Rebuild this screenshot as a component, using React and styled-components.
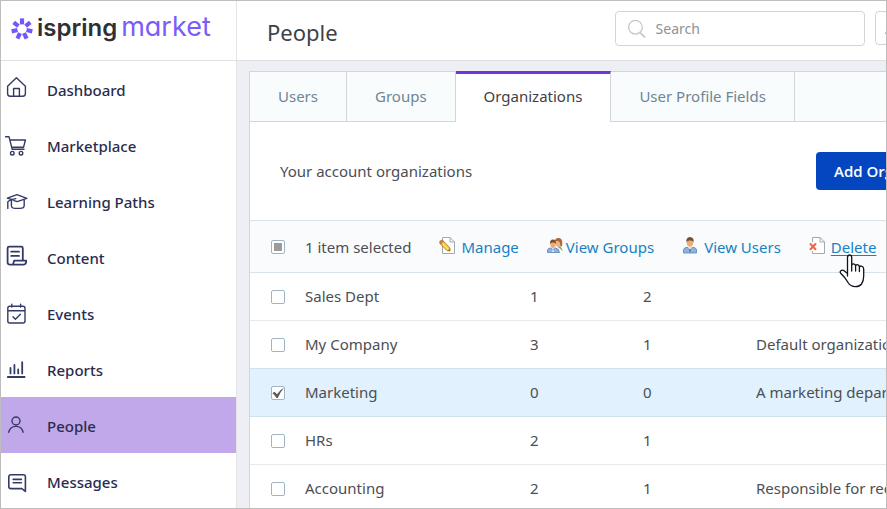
import React, { useEffect, useRef, useState } from "react";
import styled, { createGlobalStyle, css } from "styled-components";

const GlobalStyle = createGlobalStyle`
  *, *::before, *::after { box-sizing: border-box; }
  body { margin: 0; font-family: "Noto Sans", sans-serif; font-size: 15px; color: #4b4f54; background: #fff; }
`;

const Shell = styled.div`
  display: grid;
  grid-template-columns: 236px minmax(0, 1fr);
  height: 100vh;
  overflow: hidden;
  border: 1px solid #bdbdbd;
  background: #eeeff4;
`;

const Sidebar = styled.aside`
  min-height: 0;
  overflow: hidden;
  background: #fff;
  border-right: 1px solid #e3e3e5;
`;

const Brand = styled.a`
  display: flex;
  align-items: flex-start;
  gap: 3px;
  height: 60px;
  padding: 12px 9px;
  border-bottom: 1px solid #e0e0e2;
  color: #2d3136;
  text-decoration: none;
  font-family: Inter, sans-serif;
  white-space: nowrap;
`;

const BrandMark = styled.svg`
  flex: none;
  width: 24px;
  height: 32px;
`;

const BrandText = styled.span`
  display: flex;
  align-items: baseline;
  gap: 4px;
  line-height: 28px;
`;

const BrandName = styled.span`
  font-size: 24px;
  font-weight: 600;
`;

const BrandProduct = styled.span`
  color: #7a5cfa;
  font-size: 27px;
  font-weight: 400;
  font-feature-settings: "cv11";
`;

const NavLink = styled.a`
  display: flex;
  align-items: flex-start;
  gap: 20px;
  height: 56px;
  padding: 15px 4px;
  color: #2a2c4f;
  background: ${(p) => (p.$active ? "#c1a8ea" : "transparent")};
  font-weight: 500;
  line-height: 28px;
  text-decoration: none;
`;

const NavIcon = styled.svg`
  flex: none;
  width: 22px;
  height: 22px;
  overflow: visible;
  fill: none;
  stroke: #343a66;
  stroke-width: 1.4;
  stroke-linecap: round;
  stroke-linejoin: round;
`;

const Main = styled.main`
  display: flex;
  flex-direction: column;
  min-width: 0;
  overflow: hidden;
`;

const Header = styled.header`
  display: grid;
  flex: none;
  grid-template-columns: minmax(338px, 1fr) 250px auto;
  column-gap: 10px;
  height: 60px;
  padding: 10px 0 0 30px;
  background: #fff;
  border-bottom: 1px solid #e0e0e2;
`;

const PageTitle = styled.h1`
  margin: 0;
  color: #3e4247;
  font-size: 22px;
  font-weight: 400;
  line-height: 42px;
`;

const SearchBox = styled.label`
  display: flex;
  align-items: center;
  gap: 10px;
  height: 35px;
  padding: 0 12px;
  border: 1px solid #d3d4d8;
  border-radius: 4px;
`;

const SearchInput = styled.input`
  width: 100%;
  min-width: 0;
  padding: 0;
  border: 0;
  outline: 0;
  color: #4b4f54;
  font: inherit;
  font-size: 14px;
  &::placeholder { color: #8c939b; opacity: 1; }
`;

const HeaderButton = styled.button`
  height: 34px;
  padding: 0 9px;
  border: 1px solid #d3d4d8;
  border-radius: 4px;
  background: #fff;
  color: #8c939b;
  font: inherit;
  font-size: 14px;
`;

const Panel = styled.section`
  display: flex;
  flex: 1;
  flex-direction: column;
  margin: 10px 0 0 12px;
  background: #fff;
  border-top: 1px solid #d3d5d8;
  border-left: 1px solid #d3d5d8;
`;

const Tabs = styled.nav`
  display: flex;
  flex: none;
  height: 50px;
  background: #f8fcfd;
  box-shadow: inset 0 -1px #d3d5d8;
`;

const Tab = styled.a`
  padding: 0 28px;
  border-right: 1px solid #d3d5d8;
  color: #6f8596;
  line-height: 49px;
  text-decoration: none;
  white-space: nowrap;
  ${(p) =>
    p.$active &&
    css`
      margin-top: -1px;
      border-top: 3px solid #6f38d6;
      background: #fff;
      color: #3e4247;
      line-height: 45px;
    `}
`;

const Intro = styled.div`
  display: grid;
  flex: none;
  grid-template-columns: minmax(536px, 1fr) auto;
  align-items: center;
  height: 98px;
  padding: 0 30px;
`;

const IntroText = styled.p`
  margin: 0;
`;

const PrimaryButton = styled.button`
  height: 38px;
  padding: 0 18px;
  border: 0;
  border-radius: 4px;
  background: #0446c0;
  color: #fff;
  font: 600 15px "Open Sans", sans-serif;
  white-space: nowrap;
`;

const Toolbar = styled.div`
  display: grid;
  flex: none;
  grid-template-columns: 55px auto;
  justify-content: start;
  align-items: center;
  height: 53px;
  border-top: 1px solid #d8e3ec;
  border-bottom: 1px solid #d8e3ec;
  background: #f9fbfd;
  white-space: nowrap;
`;

const Actions = styled.div`
  display: flex;
  align-items: center;
  gap: 28px;
`;

const Action = styled.a`
  position: relative;
  display: flex;
  align-items: center;
  gap: ${(p) => p.$gap || 6}px;
  color: #1681c4;
  text-decoration: ${(p) => (p.$hovered ? "underline" : "none")};
  text-underline-offset: 2px;
`;

const ActionIcon = styled.svg`
  flex: none;
  width: 16px;
  height: 18px;
  margin-bottom: 4px;
`;

const Pointer = styled.svg`
  position: absolute;
  top: 18px;
  left: 30px;
  width: 26px;
  height: 34px;
`;

const Checkbox = styled.input`
  appearance: none;
  display: block;
  width: 14px;
  height: 14px;
  margin: 0 0 0 21px;
  border: 1px solid #a3b3c0;
  border-radius: 2px;
  background: #fff center / 12px 12px no-repeat;
  &:indeterminate { background: #9b9b9b; background-clip: content-box; padding: 2px; box-shadow: inset 0 0 0 2px #fff; }
  &:checked {
    background-image: url("data:image/svg+xml,%3Csvg xmlns='http://www.w3.org/2000/svg' viewBox='0 0 12 12'%3E%3Cpath d='M0.4 6.2L2.6 4.8L5 7.2Q7.5 3 12 0.8Q8.2 5 5.8 11H4.4Q3 8 .4 6.2Z' fill='%23595b5e'/%3E%3C/svg%3E");
  }
`;

const Table = styled.table`
  flex: none;
  width: 100%;
  border-collapse: separate;
  border-spacing: 0;
  table-layout: fixed;
`;

const Row = styled.tr`
  height: 48px;
  background: ${(p) => (p.$selected ? "#e1f1fe" : "#fff")};
`;

const Cell = styled.td`
  padding: 0 0 2px;
  overflow: hidden;
  border-bottom: 1px solid ${(p) => (p.$blue ? "#cfe2ef" : "#e7eaec")};
  white-space: nowrap;
`;

const CheckCell = styled(Cell)`
  padding: 0;
`;

const CheckColumn = styled.col`width: 55px;`;
const NameColumn = styled.col`width: 225px;`;
const CountColumn = styled.col`width: 113px;`;

const navItems = [
  ["Dashboard", <path d="M2.6 10.2 11.4 1.8 20.4 10.2V17.5Q20.4 20.2 17.8 20.2H5.2Q2.6 20.2 2.6 17.5ZM8.6 20V12.5H14.4V20" />],
  ["Marketplace", <><path d="M.6 4.7H4L7.2 17.3H19M4.8 8H20.4L18.6 15.2H6.8" /><circle cx="7.3" cy="21.2" r="1.8" /><circle cx="16" cy="21.2" r="1.8" /></>],
  ["Learning Paths", <path d="M2.4 10.2 12 6.6 21.8 10.4 12.2 13.6 9 12.6M2.4 10.2 8 11.8M6.4 12V18Q6.6 20.4 10.5 20.4H15Q19.2 20.4 19.2 17.5V12M2.8 20.4V14Q3.4 12 10.8 10.6" />],
  ["Content", <path strokeWidth="1.8" d="M8 20.6H5Q2.6 20.6 2.6 18.4V4.2Q2.6 2.7 4.2 2.7H16.2Q17.8 2.7 17.8 4.2V16.2M6.2 7.7H14M6.2 11.9H14M8 20.6 9.2 16.6H21.2Q21.2 20.6 18.8 20.6H5" />],
  ["Events", <path d="M4.6 6.2H18Q20 6.2 20 8.2V21Q20 23 18 23H4.8Q2.8 23 2.8 21V8.2Q2.8 6.2 4.8 6.2M3 10.8H20M6.8 4.2V7M15.6 4.2V7M8 16.8 10.4 19.2 15.4 14.2" />],
  ["Reports", <path strokeWidth="1.8" d="M2.8 21H19.6M5.5 12V17.4M9.4 9V17.4M13.2 13.5V17.4M17.2 6.2V17.4" />],
  ["People", <><circle cx="11" cy="9" r="4" /><path d="M3.6 20.2Q5.4 14.4 11 14.4Q16.6 14.4 18.2 20.2" /></>],
  ["Messages", <path strokeWidth="1.6" d="M20.4 8.2V23.4L16.8 20.6H6Q3.8 20.6 3.8 18.5V8.8Q3.8 6.7 6 6.7H18.5Q20.4 6.7 20.4 8.8M8.2 11.4H16.4M8.2 14.8H16.4" />],
];

const rows = [
  ["Sales Dept", 1, 2, ""],
  ["My Company", 3, 1, "Default organization"],
  ["Marketing", 0, 0, "A marketing department"],
  ["HRs", 2, 1, ""],
  ["Accounting", 2, 1, "Responsible for records"],
];

const Sheet = () => (
  <path d="M3.5 1.5H11L15.5 6V17.5H3.5ZM11 1.5V6H15.5" fill="#fff" stroke="#a5a9ad" />
);

const UserFigure = () => (
  <>
    <path d="M1.5 17V14Q1.5 11.8 5 11.2L8 13 11 11.2Q14.5 11.8 14.5 14V17Z" fill="#8eb3df" stroke="#5c82b4" strokeWidth=".8" />
    <path d="M6.4 9H9.6V12L8 14 6.4 12Z" fill="#f3dcc6" />
    <path d="M8 12.5 8.8 14 8 16.8 7.2 14Z" fill="#3f5c84" />
    <ellipse cx="8" cy="6.3" rx="3.3" ry="4.3" fill="#e9ad78" />
    <path d="M4.4 6.2Q3.8 1.2 8 1Q12.2 1.2 11.6 6.2Q11 4.2 8 4.4Q5 4.2 4.4 6.2Z" fill="#76502f" />
  </>
);

const ManageIcon = () => (
  <ActionIcon viewBox="0 0 16 18" aria-hidden="true">
    <Sheet />
    <path d="M.8 5.2 3.5 4 11 12.2 11 15 8 14.6 1 7.6Z" fill="#f5cf37" stroke="#967326" strokeWidth=".8" />
    <path d="M.8 5.2 3.4 4 4.6 5.3 2.2 8.7 1 7.6Z" fill="#ce7467" />
    <path d="M9 14.6 11 15V12.6Z" fill="#bd3f24" />
    <path d="M3.8 8 9 13.2" stroke="#fff19c" />
  </ActionIcon>
);

const GroupsIcon = () => (
  <ActionIcon viewBox="0 0 16 18" aria-hidden="true">
    <path d="M10 10.5 13 10Q15.5 12 15.8 15.5L13.5 13Z" fill="#7bb94d" />
    <ellipse cx="11.5" cy="6.6" rx="3" ry="4.3" fill="#edb388" />
    <path d="M7.8 5Q8.5 1.6 12 2Q16.2 2.5 15 10L13.2 10.5Q14 6 11 5Z" fill="#b8622f" />
    <path d="M.5 16.5V14Q.5 12.5 3.5 12L6 13.5 8.5 12Q12 12.3 12.5 16.5Z" fill="#8eb3df" stroke="#5c82b4" strokeWidth=".8" />
    <path d="M6 12.5 6.8 16H5.2Z" fill="#fff" />
    <ellipse cx="6" cy="8.3" rx="2.7" ry="3.7" fill="#e9ad78" />
    <path d="M3 8Q2.6 3.8 6 3.6Q9.4 3.8 9 8Q8.4 6.2 6 6.4Q3.6 6.2 3 8Z" fill="#76502f" />
  </ActionIcon>
);

const UsersIcon = () => (
  <ActionIcon viewBox="0 0 16 18" aria-hidden="true"><UserFigure /></ActionIcon>
);

const DeleteIcon = () => (
  <ActionIcon viewBox="0 0 16 18" aria-hidden="true">
    <Sheet />
    <path d="M0 6H8V15H0Z" fill="#f9fbfd" />
    <path d="M1 7.5 7 13.8M7 7.5 1 13.8" stroke="#ee6548" strokeWidth="2" />
  </ActionIcon>
);

const SelectAll = () => {
  const ref = useRef(null);
  useEffect(() => {
    ref.current.indeterminate = true;
  }, []);
  return <Checkbox type="checkbox" ref={ref} aria-label="Select all" />;
};

export default function App() {
  const [selected, setSelected] = useState({ Marketing: true });
  const toggle = (name) => setSelected((s) => ({ ...s, [name]: !s[name] }));

  return (
    <>
      <GlobalStyle />
      <Shell>
        <Sidebar>
          <Brand href="#home">
            <BrandMark viewBox="0 0 24 32" aria-hidden="true">
              {[0, 1, 2, 3, 4, 5, 6].map((i) => (
                <path
                  key={i}
                  d="M9.9 5.4H14.1V11.4H9.9Z"
                  fill="#7457fa"
                  transform={`rotate(${(i * 360) / 7} 12 16)`}
                />
              ))}
            </BrandMark>
            <BrandText>
              <BrandName>ispring</BrandName>
              <BrandProduct>market</BrandProduct>
            </BrandText>
          </Brand>
          <nav>
            {navItems.map(([label, drawing]) => (
              <NavLink key={label} href={`#${label}`} $active={label === "People"}>
                <NavIcon viewBox="0 0 22 22" aria-hidden="true">{drawing}</NavIcon>
                <span>{label}</span>
              </NavLink>
            ))}
          </nav>
        </Sidebar>
        <Main>
          <Header>
            <PageTitle>People</PageTitle>
            <SearchBox>
              <svg width="20" height="22" viewBox="0 0 20 22" fill="none" stroke="#c5c7cd" strokeWidth="1.5" aria-hidden="true">
                <circle cx="8.5" cy="9" r="7.8" />
                <path d="M13.8 15 19.4 20.6" strokeWidth="2" />
              </svg>
              <SearchInput type="search" placeholder="Search" aria-label="Search" />
            </SearchBox>
            <HeaderButton type="button">All</HeaderButton>
          </Header>
          <Panel>
            <Tabs>
              <Tab href="#users">Users</Tab>
              <Tab href="#groups">Groups</Tab>
              <Tab href="#organizations" $active>Organizations</Tab>
              <Tab href="#fields">User Profile Fields</Tab>
            </Tabs>
            <Intro>
              <IntroText>Your account organizations</IntroText>
              <PrimaryButton type="button">Add Organization</PrimaryButton>
            </Intro>
            <Toolbar>
              <SelectAll />
              <Actions>
                <span>1 item selected</span>
                <Action href="#manage"><ManageIcon />Manage</Action>
                <Action href="#view-groups" $gap={3}><GroupsIcon />View Groups</Action>
                <Action href="#view-users"><UsersIcon />View Users</Action>
                <Action href="#delete" $hovered>
                  <DeleteIcon />Delete
                  <Pointer viewBox="0 0 26 34" aria-hidden="true">
                    <path
                      d="M8.5 22V3.2Q8.7 1 10.6 1Q12.5 1 12.7 3.2V11.5Q12.9 9.7 14.5 9.8Q16.4 9.9 16.6 12Q17 10.3 18.5 10.6Q20.3 11 20.4 13.2Q21 11.6 22.6 12.1Q24.6 12.6 24.7 15V22Q24.7 27 22.5 30Q20.5 32.6 16.5 32.6Q11.5 32.6 9 28.5Q7.4 26 5.4 23.2L1.5 19Q.7 17.6 1.9 16.7Q3.2 15.7 4.8 16.6L8.5 19.5M12.7 11V17M16.6 11.5V17M20.4 13V17.5"
                      fill="#fff" stroke="#10131c" strokeWidth="1.3" strokeLinejoin="round" strokeLinecap="round"
                    />
                  </Pointer>
                </Action>
              </Actions>
            </Toolbar>
            <Table>
              <colgroup>
                <CheckColumn />
                <NameColumn />
                <CountColumn />
                <CountColumn />
                <col />
              </colgroup>
              <tbody>
                {rows.map(([name, groups, users, description], i) => {
                  const blue = selected[name] || (rows[i + 1] && selected[rows[i + 1][0]]);
                  const id = `row-${i}`;
                  return (
                    <Row key={name} $selected={selected[name]}>
                      <CheckCell $blue={blue}>
                        <Checkbox type="checkbox" id={id} checked={!!selected[name]} onChange={() => toggle(name)} />
                      </CheckCell>
                      <Cell $blue={blue}><label htmlFor={id}>{name}</label></Cell>
                      <Cell $blue={blue}>{groups}</Cell>
                      <Cell $blue={blue}>{users}</Cell>
                      <Cell $blue={blue}>{description}</Cell>
                    </Row>
                  );
                })}
              </tbody>
            </Table>
          </Panel>
        </Main>
      </Shell>
    </>
  );
}
